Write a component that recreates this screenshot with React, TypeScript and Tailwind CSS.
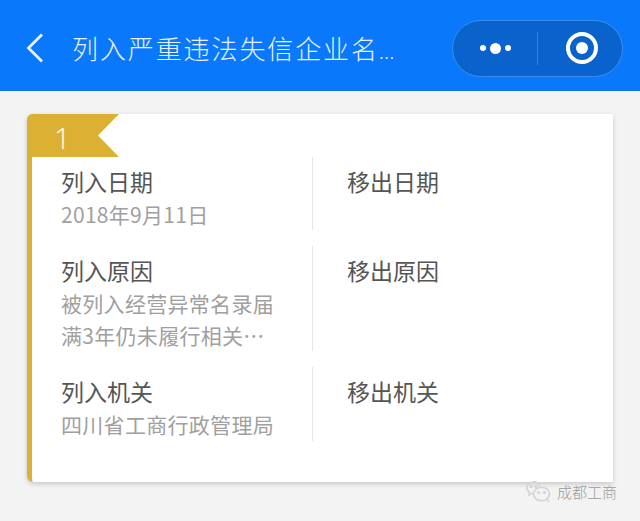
const rows = [
  { inLabel: '列入日期', value: ['2018年9月11日'], outLabel: '移出日期', height: 'h-[73px]' },
  { inLabel: '列入原因', value: ['被列入经营异常名录届', '满3年仍未履行相关…'], outLabel: '移出原因', height: 'h-[105px]' },
  { inLabel: '列入机关', value: ['四川省工商行政管理局'], outLabel: '移出机关', height: 'h-[74px]' },
];

const fontStack = "font-['Noto_Sans_CJK_SC','Noto_Sans',sans-serif]";

const App = () => {
  return (
    <div className={`relative h-[521px] w-[640px] overflow-hidden bg-[#f3f3f3] ${fontStack}`}>
      {/* Top bar */}
      <header className="flex h-[91px] items-center bg-[#0a78fb] pr-[17px] border-b border-[#0a6fe8]">
        <svg width="20" height="32" viewBox="0 0 20 32" fill="none" className="ml-[25px] mt-[5px] shrink-0">
          <path d="M17 2.5 L3.5 16 L17 29.5" stroke="#e8f2ff" strokeWidth="2.8" />
        </svg>
        <h1 className="ml-[27px] mt-[5px] flex flex-1 items-baseline whitespace-nowrap text-[26px] leading-none font-light tracking-[1.9px] text-[#e6f1ff]">
          列入严重违法失信企业名
          <span className="text-[19px] tracking-[0.5px]">...</span>
        </h1>
        <div className="flex mt-[6px] h-[57px] w-[171px] shrink-0 items-center rounded-full border border-[#3a8ef0] bg-[#0a62cc]">
          <div className="flex w-[84px] items-center justify-center gap-[4px]">
            <span className="h-[6px] w-[6px] rounded-full bg-white" />
            <span className="h-[11px] w-[11px] rounded-full bg-white" />
            <span className="h-[6px] w-[6px] rounded-full bg-white" />
          </div>
          <div className="h-[33px] w-px bg-[#2f83e6]" />
          <div className="flex flex-1 items-center justify-center pl-[3px]">
            <div className="flex h-[32px] w-[32px] items-center justify-center rounded-full border-[4px] border-white">
              <span className="h-[12px] w-[12px] rounded-full bg-white" />
            </div>
          </div>
        </div>
      </header>

      {/* Card */}
      <section className="relative ml-[27px] mt-[23px] h-[368px] w-[586px] rounded-l-[6px] border-l-[5px] border-[#d8b33a] bg-white pt-[43px] shadow-[0_2px_5px_rgba(0,0,0,0.18)]">
        {/* Ribbon */}
        <svg width="92" height="43" viewBox="0 0 92 43" className="absolute left-[-5px] top-0">
          <path d="M0 7 Q0 0 7 0 L92 0 L71 21.5 L92 43 L0 43 Z" fill="#dcb032" />
        </svg>
        <span className="absolute left-[22px] top-[6px] font-['Noto_Sans',sans-serif] text-[29px] leading-[36px] font-light text-[#fff6d8]">
          1
        </span>

        <div className="flex flex-col gap-[16px]">
          {rows.map((row) => (
            <div key={row.inLabel} className={`flex ${row.height}`}>
              <div className="w-[280px] shrink-0 pl-[29px] pt-[8px]">
                <div className="text-[23px] leading-[33px] text-[#555555]">{row.inLabel}</div>
                {row.value.map((line) => (
                  <div key={line} className="whitespace-nowrap text-[21px] leading-[32px] tracking-[0.3px] text-[#a0a0a0]">
                    {line}
                  </div>
                ))}
              </div>
              <div className="w-px bg-[#e6e6e6]" />
              <div className="pl-[34px] pt-[8px] text-[23px] leading-[33px] text-[#555555]">{row.outLabel}</div>
            </div>
          ))}
        </div>
      </section>

      {/* WeChat watermark */}
      <div className="absolute left-[526px] top-[480px] flex items-center gap-[5px]">
        <svg width="26" height="24" viewBox="0 0 26 24" fill="none" stroke="#d4d4d4" strokeWidth="1.6">
          <path d="M14 6 C12.5 3 9.5 1.5 7 2 C3.5 2.5 1 5 1 8 C1 10 2 11.5 3.5 12.5 L3 15 L5.8 13.6 C6.5 13.8 7.2 14 8 14" />
          <ellipse cx="15.5" cy="14" rx="8" ry="6.8" />
          <path d="M21 19.5 L23 22" />
          <circle cx="5" cy="6.5" r="0.8" fill="#c0c0c0" />
          <circle cx="10" cy="6.5" r="0.8" fill="#c0c0c0" />
          <circle cx="12.5" cy="12.5" r="0.7" fill="#c0c0c0" />
          <circle cx="18.5" cy="12.5" r="0.7" fill="#c0c0c0" />
        </svg>
        <span className="whitespace-nowrap text-[15px] leading-[24px] font-light text-[#9a9a9a]">成都工商</span>
      </div>
    </div>
  );
};

export default App;
